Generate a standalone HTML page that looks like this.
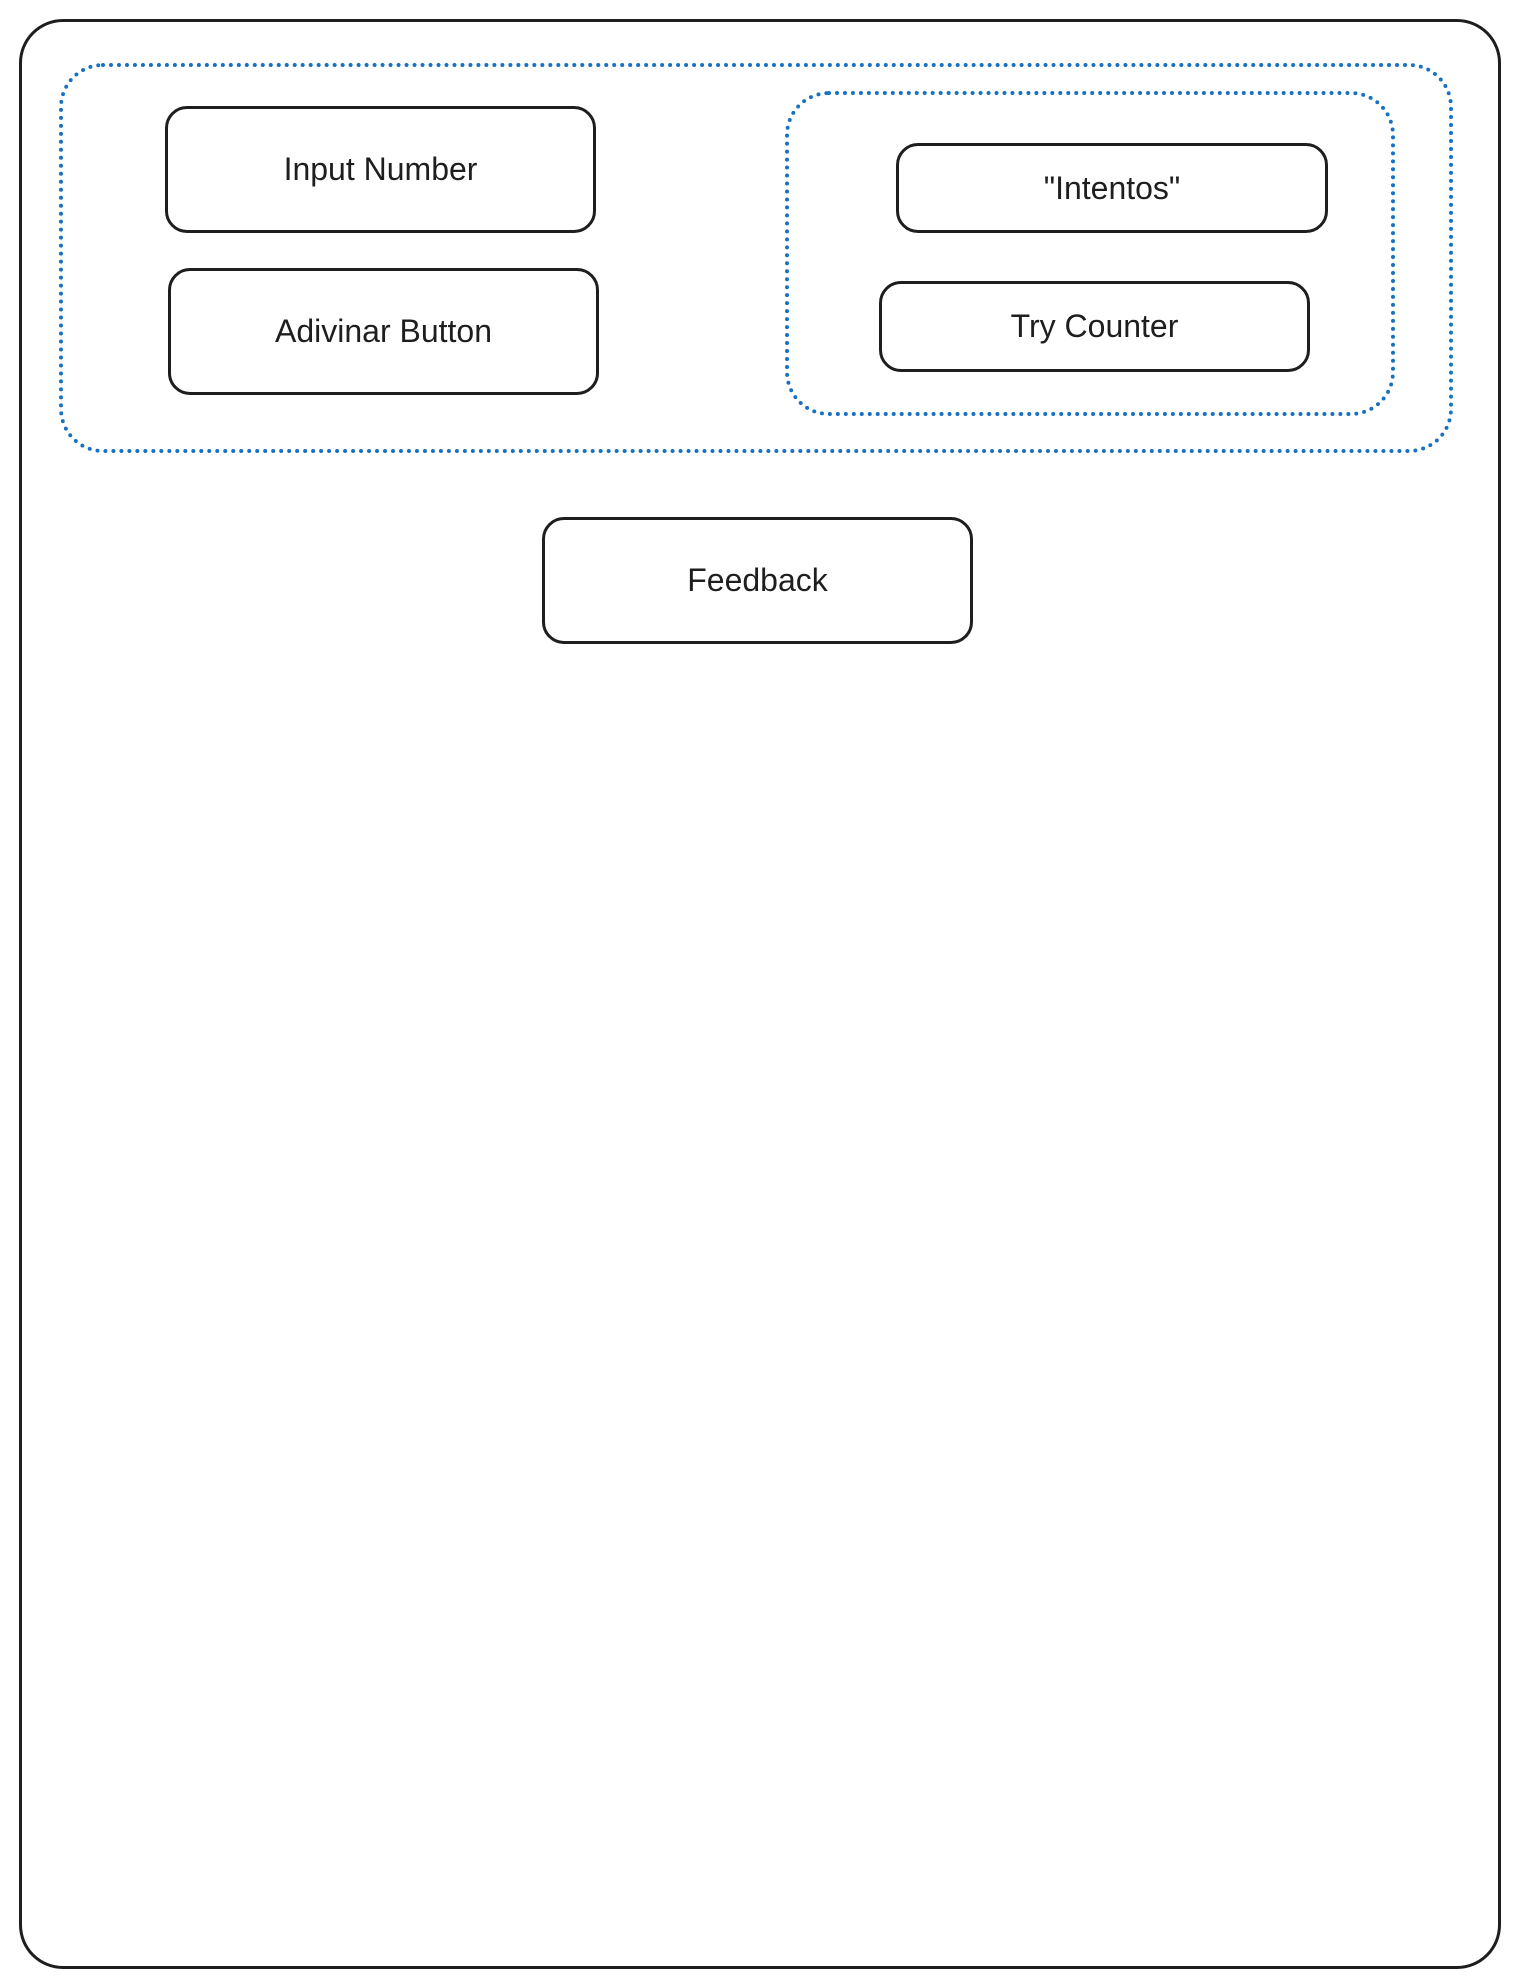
<!DOCTYPE html>
<html><head><meta charset="utf-8"><style>
html,body{margin:0;padding:0;background:#fff;width:1519px;height:1986px;overflow:hidden;position:relative}
.b{position:absolute;box-sizing:border-box;border:3.5px solid #1e1e1e;border-radius:22px;display:flex;align-items:center;justify-content:center;font-family:"Liberation Sans",sans-serif;font-size:32px;color:#1e1e1e}
.d{position:absolute;box-sizing:border-box;border:4px dotted #1971c2;border-radius:44px}
</style></head><body>
<div class="b" style="left:19px;top:19px;width:1482px;height:1950px;border-radius:44px"></div>
<div class="d" style="left:59px;top:63px;width:1394px;height:390px"></div>
<div class="d" style="left:785px;top:91px;width:610px;height:325px"></div>
<div class="b" style="left:165px;top:106px;width:431px;height:127px">Input Number</div>
<div class="b" style="left:168px;top:268px;width:431px;height:127px">Adivinar Button</div>
<div class="b" style="left:896px;top:143px;width:432px;height:90px">"Intentos"</div>
<div class="b" style="left:879px;top:281px;width:431px;height:91px">Try Counter</div>
<div class="b" style="left:542px;top:517px;width:431px;height:127px">Feedback</div>
</body></html>
